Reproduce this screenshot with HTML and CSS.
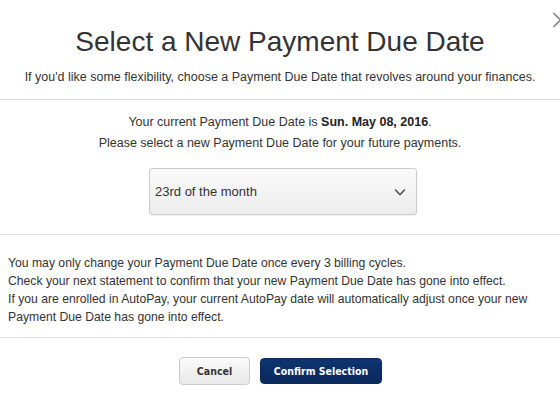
FILE: index.html
```html
<!DOCTYPE html>
<html>
<head>
<meta charset="utf-8">
<link rel="stylesheet" href="styles.css">
</head>
<body>
<div class="modal">
  <svg class="close" width="8" height="16" viewBox="0 0 8 16"><path d="M0.5 1 L7.5 8 L0.5 15" fill="none" stroke="#888" stroke-width="1.6"/></svg>
  <header class="head">
    <h1 class="title">Select a New Payment Due Date</h1>
    <p class="sub">If you'd like some flexibility, choose a Payment Due Date that revolves around your finances.</p>
  </header>
  <section class="choose">
    <p class="line">Your current Payment Due Date is <b>Sun. May 08, 2016</b>.</p>
    <p class="line">Please select a new Payment Due Date for your future payments.</p>
    <div class="select">
      <span>23rd of the month</span>
      <svg class="chev" width="12" height="8" viewBox="0 0 12 8"><path d="M1 1.5 L6 6.5 L11 1.5" fill="none" stroke="#555" stroke-width="1.6"/></svg>
    </div>
  </section>
  <section class="notes">
    <p>You may only change your Payment Due Date once every 3 billing cycles.<br>
    Check your next statement to confirm that your new Payment Due Date has gone into effect.<br>
    If you are enrolled in AutoPay, your current AutoPay date will automatically adjust once your new<br>Payment Due Date has gone into effect.</p>
  </section>
  <footer class="actions">
    <button class="btn cancel">Cancel</button>
    <button class="btn confirm">Confirm Selection</button>
  </footer>
</div>
</body>
</html>
```
FILE: styles.css
```css
* { box-sizing: border-box; }
html, body { margin: 0; padding: 0; background: #fff; }
body { font-family: "Liberation Sans", Arial, sans-serif; color: #333; }
.modal { position: relative; width: 560px; height: 401px; overflow: hidden; }
.close { position: absolute; left: 553px; top: 12px; }
.head { padding-top: 25px; height: 100px; border-bottom: 1px solid #ddd; text-align: center; }
.title { margin: 0; font-weight: normal; font-size: 28px; line-height: 34px; color: #333; }
.sub { margin: 10px 0 0; font-size: 12.5px; line-height: 16px; color: #333; }
.choose { height: 135px; border-bottom: 1px solid #ddd; display: flex; flex-direction: column; align-items: center; padding-top: 12px; }
.line { margin: 0; font-size: 12.5px; line-height: 21px; color: #333; }
.line b { font-weight: bold; color: #222; }
.select { margin: 14px 0 0 6px; width: 268px; height: 47px; border: 1px solid #ccc; border-radius: 3px; background: linear-gradient(#fafafa, #ececec); display: flex; align-items: center; justify-content: space-between; padding: 0 10px 0 5px; font-size: 13px; color: #333; box-shadow: 0 1px 1px rgba(0,0,0,0.06); }
.notes { height: 103px; border-bottom: 1px solid #ddd; padding: 19px 8px 0; }
.notes p { margin: 0; font-size: 12.2px; line-height: 18px; color: #333; }
.actions { display: flex; justify-content: center; gap: 10px; padding-top: 19px; padding-left: 1px; }
.btn { font-family: "DejaVu Sans Condensed", "DejaVu Sans", sans-serif; font-weight: bold; font-size: 10.5px; border-radius: 4px; height: 28px; }
.cancel { width: 71px; border: 1px solid #ccc; background: linear-gradient(#fbfbfb, #e8e8e8); color: #333; }
.confirm { width: 122px; border: 1px solid #0b2a5e; background: linear-gradient(#0e3470, #0a285c); color: #fff; height: 26px; margin-top: 1px; }
```
